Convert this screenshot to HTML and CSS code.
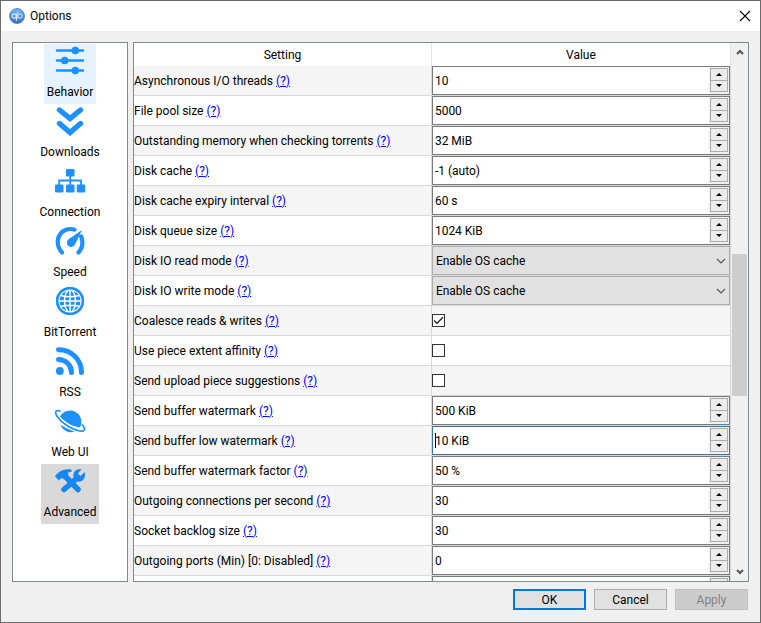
FILE: index.html
```html
<!DOCTYPE html>
<html lang="en">
<head>
<meta charset="utf-8">
<title>Options</title>
<link rel="stylesheet" href="styles.css">
</head>
<body>
<div class="dialog">
  <header class="titlebar">
    <svg class="logo" viewBox="0 0 16 16" aria-hidden="true">
      <defs><linearGradient id="lg" x1="0" y1="0" x2="0" y2="1"><stop offset="0" stop-color="#72b4f5"/><stop offset="1" stop-color="#356ebf"/></linearGradient></defs>
      <circle cx="8" cy="8" r="7.5" fill="url(#lg)" stroke="#3f7cb8" stroke-width=".8"/>
      <g fill="none" stroke-width="1.1"><circle cx="5.2" cy="8" r="2.1" stroke="#dcecff"/><path d="M7.4 5.6V13" stroke="#dcecff"/><circle cx="11" cy="8" r="2.1" stroke="#b4dcfa"/><path d="M8.8 3V10.4" stroke="#b4dcfa"/></g>
    </svg>
    <h1 class="title">Options</h1>
    <button class="close" type="button" aria-label="Close"><svg viewBox="0 0 12 12"><path d="M1 1L11 11M11 1L1 11" stroke="#000" stroke-width="1.1"/></svg></button>
  </header>

  <main class="content">
    <nav class="sidebar">
      <button class="tab tab-hover" type="button">
        <svg viewBox="0 0 32 32"><path d="M3 6.500H29M3 16.500H29M3 26.500H29" stroke="#1e90ff" stroke-width="2.4" stroke-linecap="round"/><g fill="#1e90ff"><circle cx="21.300" cy="6.500" r="3.800"/><circle cx="10.600" cy="16.500" r="3.800"/><circle cx="21.300" cy="26.500" r="3.800"/></g></svg>
        Behavior</button>
      <button class="tab" type="button">
        <svg viewBox="0 0 32 32"><path d="M5.500 6L16 14.500L26.500 6M5.500 19.500L16 28.500L26.500 19.500" fill="none" stroke="#1e90ff" stroke-width="5.400" stroke-linecap="round"/></svg>
        Downloads</button>
      <button class="tab" type="button">
        <svg viewBox="0 0 32 32"><g fill="#1e90ff"><rect x="12" y="5" width="8.500" height="7.500" rx="1.200"/><rect x="1" y="20.500" width="8.500" height="8" rx="1.200"/><rect x="12" y="20.500" width="8.500" height="8" rx="1.200"/><rect x="22.700" y="20.500" width="8.500" height="8" rx="1.200"/></g><path d="M16.200 12V21M5.200 21V16.500H27V21" fill="none" stroke="#1e90ff" stroke-width="1.800"/></svg>
        Connection</button>
      <button class="tab" type="button">
        <svg viewBox="0 0 32 32"><path d="M8 28.500C1 21 3 9.500 11.500 6C14.500 4.800 17.800 4.800 20.500 5.700M27.200 12.500C29.200 18 28.500 24 24.500 28.500" fill="none" stroke="#1e90ff" stroke-width="4.200" stroke-linecap="round"/><path d="M28 6L21 20.500A4.300 4.300 0 1 1 14.500 15.200Z" fill="#1e90ff"/></svg>
        Speed</button>
      <button class="tab" type="button">
        <svg viewBox="0 0 32 32"><circle cx="16" cy="17" r="14" fill="#1e90ff"/><g fill="none" stroke="#fff" stroke-width="1.500"><ellipse cx="16" cy="17" rx="5.500" ry="11.300"/><circle cx="16" cy="17" r="11.300"/><path d="M16 5V29M4 17H28M6.500 11.500Q16 14 25.500 11.500M6.500 22.500Q16 20 25.500 22.500"/></g><circle cx="16" cy="17" r="12.800" fill="none" stroke="#1e90ff" stroke-width="2.500"/></svg>
        BitTorrent</button>
      <button class="tab" type="button">
        <svg viewBox="0 0 32 32"><circle cx="5.800" cy="27" r="3.900" fill="#1e90ff"/><path d="M4.500 15.500A13 13 0 0 1 17.500 28.500M4.500 5.700A22.500 22.500 0 0 1 27.500 28.500" fill="none" stroke="#1e90ff" stroke-width="5" stroke-linecap="round"/></svg>
        RSS</button>
      <button class="tab" type="button">
        <svg viewBox="0 0 32 32"><path d="M6 12.500A10.800 10.800 0 1 1 26 23.500C19 22.500 11 18.500 6 12.500ZM6.500 20.500C11 24 15 25.500 20.500 27.500A10.800 10.800 0 0 1 6.500 20.500Z" fill="#1e90ff"/><path d="M6 7C1 5.500 .500 8.500 3.500 13C8.500 20 18 25.500 25.500 27C31 27.800 32 25 28.500 21" fill="none" stroke="#1e90ff" stroke-width="1.700" stroke-linecap="round"/></svg>
        Web UI</button>
      <button class="tab tab-selected" type="button">
        <svg viewBox="0 0 32 32"><path d="M11 12L24 25.500" stroke="#1586f5" stroke-width="5.500" stroke-linecap="round"/><path d="M1 12.500C4 8 9 4.500 17 5.500L18 7.500C14.500 8 13 9 14.500 11L10.500 15.500C7.500 13.500 7 14 5 16.500Z" fill="#1586f5"/><path d="M10 25.500L23 14" stroke="#1586f5" stroke-width="5.500" stroke-linecap="round"/><path d="M27.500 5.500C23 4 18.500 7.500 19.500 12.500C20 18 26 19 29 16C31 14 31.500 11 30.500 8L26.500 12L23.800 9.500Z" fill="#1586f5"/></svg>
        Advanced</button>
    </nav>

    <section class="panel">
      <div class="viewport">
        <table class="settings">
          <thead><tr><th scope="col" class="name">Setting</th><th scope="col">Value</th></tr></thead>
          <tbody>
            <tr><td><label for="s1">Asynchronous I/O threads</label> <a href="#s1">(?)</a></td><td><div class="spin"><input id="s1" type="text" value="10"><span class="steps"><button type="button" class="up" aria-label="Increase"></button><button type="button" class="down" aria-label="Decrease"></button></span></div></td></tr>
            <tr><td><label for="s2">File pool size</label> <a href="#s2">(?)</a></td><td><div class="spin"><input id="s2" type="text" value="5000"><span class="steps"><button type="button" class="up" aria-label="Increase"></button><button type="button" class="down" aria-label="Decrease"></button></span></div></td></tr>
            <tr><td><label for="s3">Outstanding memory when checking torrents</label> <a href="#s3">(?)</a></td><td><div class="spin"><input id="s3" type="text" value="32 MiB"><span class="steps"><button type="button" class="up" aria-label="Increase"></button><button type="button" class="down" aria-label="Decrease"></button></span></div></td></tr>
            <tr><td><label for="s4">Disk cache</label> <a href="#s4">(?)</a></td><td><div class="spin"><input id="s4" type="text" value="-1 (auto)"><span class="steps"><button type="button" class="up" aria-label="Increase"></button><button type="button" class="down" aria-label="Decrease"></button></span></div></td></tr>
            <tr><td><label for="s5">Disk cache expiry interval</label> <a href="#s5">(?)</a></td><td><div class="spin"><input id="s5" type="text" value="60 s"><span class="steps"><button type="button" class="up" aria-label="Increase"></button><button type="button" class="down" aria-label="Decrease"></button></span></div></td></tr>
            <tr><td><label for="s6">Disk queue size</label> <a href="#s6">(?)</a></td><td><div class="spin"><input id="s6" type="text" value="1024 KiB"><span class="steps"><button type="button" class="up" aria-label="Increase"></button><button type="button" class="down" aria-label="Decrease"></button></span></div></td></tr>
            <tr><td><label for="s7">Disk IO read mode</label> <a href="#s7">(?)</a></td><td><div class="combo"><select id="s7"><option>Enable OS cache</option><option>Disable OS cache</option></select><svg viewBox="0 0 10 6"><path d="M1 1L5 5L9 1" fill="none" stroke="#555" stroke-width="1.100"/></svg></div></td></tr>
            <tr><td><label for="s8">Disk IO write mode</label> <a href="#s8">(?)</a></td><td><div class="combo"><select id="s8"><option>Enable OS cache</option><option>Disable OS cache</option></select><svg viewBox="0 0 10 6"><path d="M1 1L5 5L9 1" fill="none" stroke="#555" stroke-width="1.100"/></svg></div></td></tr>
            <tr><td><label for="s9">Coalesce reads &amp; writes</label> <a href="#s9">(?)</a></td><td><div class="check"><input id="s9" type="checkbox" checked><svg viewBox="0 0 13 13"><path d="M2 6.500L5 9.300L11 3.300" fill="none" stroke="#222" stroke-width="1.300"/></svg></div></td></tr>
            <tr><td><label for="s10">Use piece extent affinity</label> <a href="#s10">(?)</a></td><td><div class="check"><input id="s10" type="checkbox"></div></td></tr>
            <tr><td><label for="s11">Send upload piece suggestions</label> <a href="#s11">(?)</a></td><td><div class="check"><input id="s11" type="checkbox"></div></td></tr>
            <tr><td><label for="s12">Send buffer watermark</label> <a href="#s12">(?)</a></td><td><div class="spin"><input id="s12" type="text" value="500 KiB"><span class="steps"><button type="button" class="up" aria-label="Increase"></button><button type="button" class="down" aria-label="Decrease"></button></span></div></td></tr>
            <tr><td><label for="s13">Send buffer low watermark</label> <a href="#s13">(?)</a></td><td><div class="spin spin-active"><input id="s13" type="text" value="10 KiB"><span class="steps"><button type="button" class="up" aria-label="Increase"></button><button type="button" class="down" aria-label="Decrease"></button></span></div></td></tr>
            <tr><td><label for="s14">Send buffer watermark factor</label> <a href="#s14">(?)</a></td><td><div class="spin"><input id="s14" type="text" value="50 %"><span class="steps"><button type="button" class="up" aria-label="Increase"></button><button type="button" class="down" aria-label="Decrease"></button></span></div></td></tr>
            <tr><td><label for="s15">Outgoing connections per second</label> <a href="#s15">(?)</a></td><td><div class="spin"><input id="s15" type="text" value="30"><span class="steps"><button type="button" class="up" aria-label="Increase"></button><button type="button" class="down" aria-label="Decrease"></button></span></div></td></tr>
            <tr><td><label for="s16">Socket backlog size</label> <a href="#s16">(?)</a></td><td><div class="spin"><input id="s16" type="text" value="30"><span class="steps"><button type="button" class="up" aria-label="Increase"></button><button type="button" class="down" aria-label="Decrease"></button></span></div></td></tr>
            <tr><td><label for="s17">Outgoing ports (Min) [0: Disabled]</label> <a href="#s17">(?)</a></td><td><div class="spin"><input id="s17" type="text" value="0"><span class="steps"><button type="button" class="up" aria-label="Increase"></button><button type="button" class="down" aria-label="Decrease"></button></span></div></td></tr>
            <tr><td></td><td><div class="spin"><input type="text" aria-label="Next setting"><span class="steps"><button type="button" class="up" aria-label="Increase"></button><button type="button" class="down" aria-label="Decrease"></button></span></div></td></tr>
          </tbody>
        </table>
      </div>
      <div class="scrollbar">
        <button type="button" aria-label="Scroll up"><svg viewBox="0 0 8 6"><path d="M1 5L4 2L7 5" fill="none" stroke="#555" stroke-width="2"/></svg></button>
        <div class="track"><div class="thumb"></div></div>
        <button type="button" aria-label="Scroll down"><svg viewBox="0 0 8 6"><path d="M1 1L4 4L7 1" fill="none" stroke="#555" stroke-width="2"/></svg></button>
      </div>
    </section>
  </main>

  <footer class="actions">
    <button type="button" class="default">OK</button>
    <button type="button">Cancel</button>
    <button type="button" disabled>Apply</button>
  </footer>
</div>
</body>
</html>
```
FILE: styles.css
```css
* { box-sizing: border-box; }

body {
  margin: 0;
  color: #000;
  font: 12px/16px Roboto, "Open Sans", sans-serif;
}

button, input, select {
  margin: 0;
  padding: 0;
  border: 0;
  border-radius: 0;
  color: inherit;
  font: inherit;
  outline: 0;
}

.dialog {
  display: flex;
  flex-direction: column;
  height: 100vh;
  border: 1px solid #6b6b6b;
  background: #f0f0f0;
}

.titlebar {
  display: flex;
  flex: none;
  align-items: center;
  gap: 5px;
  height: 30px;
  padding: 0 9px 0 8px;
  background: #fff;
}
.logo { width: 16px; height: 16px; }
.title { flex: 1; margin: 0; font-size: 12px; font-weight: 400; }
.close { display: flex; background: none; }
.close svg { width: 12px; height: 12px; }

.content {
  display: flex;
  flex: 1;
  gap: 5px;
  min-height: 0;
  padding: 11px 11px 0;
}

.sidebar {
  display: flex;
  flex: none;
  flex-direction: column;
  align-items: center;
  width: 116px;
  padding-top: 1px;
  border: 1px solid #828790;
  background: #fff;
}
.tab {
  display: flex;
  flex-direction: column;
  align-items: center;
  gap: 8px;
  height: 60px;
  padding: 0 3px;
  background: none;
}
.tab svg { width: 32px; height: 32px; }
.tab-hover { background: #e5f3ff; }
.tab-selected { background: #d9d9d9; }

.panel {
  display: flex;
  flex: 1;
  min-width: 0;
  border: 1px solid #828790;
  background: #fff;
}
.viewport { flex: 1; min-width: 0; overflow: hidden; }

.settings {
  width: 100%;
  border-spacing: 0;
  table-layout: fixed;
}
.settings th {
  height: 23px;
  padding: 0;
  border-right: 1px solid #e5e5e5;
  font-weight: 400;
}
.settings .name { width: 49.9%; }
.settings td {
  height: 30px;
  padding: 0;
  border-right: 1px solid #d8d8d8;
  border-bottom: 1px solid #d8d8d8;
  white-space: nowrap;
}
.settings tbody tr:nth-child(odd) { background: #f5f5f5; }
.settings a { color: #00f; }

.spin {
  position: relative;
  display: flex;
  height: 29px;
  border: 1px solid #7a7a7a;
  background: #fff;
}
.spin input { flex: 1; min-width: 0; padding: 0 2px; background: none; }
.spin-active { border-color: #3c7399; }
.spin-active::before {
  content: "";
  position: absolute;
  top: 6px;
  left: 2px;
  width: 1px;
  height: 15px;
  background: #000;
}
.steps {
  display: flex;
  flex-direction: column;
  width: 20px;
  padding: 1px 1px 2px;
  background: #f0f0f0;
}
.steps button {
  display: flex;
  flex: 1;
  align-items: center;
  justify-content: center;
  border: 1px solid #acacac;
  background: #ececec;
}
.steps .down { border-top: 0; }
.steps button::before {
  content: "";
  border: 3px solid transparent;
}
.steps .up::before { border-top: 0; border-bottom-color: #000; }
.steps .down::before { border-bottom: 0; border-top-color: #000; }

.combo { position: relative; display: flex; }
.combo select {
  width: 100%;
  height: 29px;
  padding: 0 3px;
  border: 1px solid #adadad;
  background: #e1e1e1;
  appearance: none;
}
.combo svg {
  position: absolute;
  top: 12px;
  right: 4px;
  width: 10px;
  height: 6px;
  pointer-events: none;
}

.check { position: relative; display: flex; }
.check input {
  width: 13px;
  height: 13px;
  border: 1px solid #333;
  background: #fff;
  appearance: none;
}
.check svg {
  position: absolute;
  top: 0;
  left: 0;
  width: 13px;
  height: 13px;
  pointer-events: none;
}

.scrollbar {
  display: flex;
  flex: none;
  flex-direction: column;
  width: 17px;
  padding: 0 1px;
  background: #f0f0f0;
}
.scrollbar button {
  display: flex;
  align-items: center;
  justify-content: center;
  height: 18px;
  background: none;
}
.scrollbar svg { width: 8px; height: 6px; }
.track {
  display: grid;
  flex: 1;
  grid-template-rows: 193fr 142fr 167fr;
}
.thumb { grid-row: 2; background: #cdcdcd; }

.actions {
  display: flex;
  flex: none;
  justify-content: flex-end;
  gap: 8px;
  padding: 7px 12px 12px;
}
.actions button {
  width: 73px;
  height: 21px;
  border: 1px solid #adadad;
  background: #e1e1e1;
}
.actions .default { border: 2px solid #0078d7; }
.actions button:disabled {
  border-color: #bfbfbf;
  background: #ccc;
  color: #838383;
}
```
